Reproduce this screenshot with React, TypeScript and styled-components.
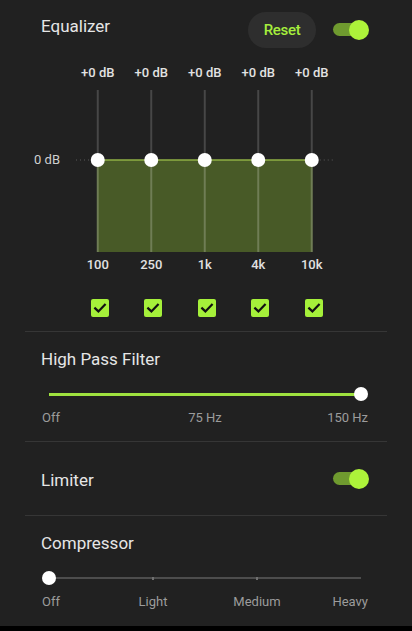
import React from 'react';
import styled, { createGlobalStyle } from 'styled-components';

const GlobalStyle = createGlobalStyle`
  html, body {
    margin: 0;
    padding: 0;
    background: #000;
  }
  body {
    font-family: Roboto, 'Noto Sans', sans-serif;
  }
`;

const accent = '#a6ee3d';

const Panel = styled.main`
  width: 412px;
  height: 626px;
  background: #212121;
  padding: 0 25px;
  box-sizing: border-box;
  display: flex;
  flex-direction: column;
`;

const Section = styled.section<{ divided?: boolean }>`
  padding: 0 18px 0 16px;
  border-top: ${p => (p.divided ? '1px solid #363636' : '0')};
  display: flex;
  flex-direction: column;
`;

const Header = styled.div`
  margin-top: 12px;
  height: 36px;
  display: flex;
  align-items: flex-start;
`;

const Title = styled.h2<{ top?: number }>`
  margin: 0;
  padding-top: ${p => p.top ?? 0}px;
  font-size: 17px;
  line-height: 20px;
  font-weight: 400;
  color: #e6e6e6;
  flex: 1;
`;

const ResetButton = styled.button`
  width: 68px;
  height: 36px;
  border: 0;
  border-radius: 18px;
  background: #2e2e2e;
  color: ${accent};
  font-family: Roboto, sans-serif;
  font-size: 15px;
  font-weight: 500;
  letter-spacing: -0.3px;
  padding: 0;
  margin-right: 17px;
`;

const ToggleTrack = styled.div<{ mt?: number }>`
  width: 33px;
  height: 13px;
  margin-top: ${p => p.mt ?? 0}px;
  border-radius: 7px;
  background: #6f9a2f;
  display: flex;
  align-items: center;
  justify-content: flex-end;
  margin-right: 3px;
`;

const ToggleThumb = styled.div`
  width: 20px;
  height: 20px;
  border-radius: 50%;
  background: #adf33a;
  flex-shrink: 0;
  margin-right: -3px;
`;

const Columns = styled.div<{ mt: number; shift?: number; mb?: number }>`
  display: grid;
  grid-template-columns: repeat(5, 53.5px);
  margin-top: ${p => p.mt}px;
  margin-bottom: ${p => p.mb ?? 0}px;
  margin-left: ${p => 30 + (p.shift ?? 0)}px;
`;

const ColLabel = styled.span`
  text-align: center;
  font-size: 13px;
  line-height: 15px;
  font-weight: 500;
  color: #e2e2e2;
  white-space: nowrap;
`;

const GraphRow = styled.div`
  display: flex;
  margin-top: 10px;
  height: 162px;
`;

const ZeroLabel = styled.span`
  width: 30px;
  box-sizing: border-box;
  padding-right: 11px;
  display: flex;
  justify-content: flex-end;
  align-self: flex-start;
  white-space: nowrap;
  font-size: 13px;
  line-height: 15px;
  color: #d0d0d0;
  margin-top: 62px;
`;

const Graph = styled.svg`
  overflow: visible;
  display: block;
`;

const CheckCell = styled.div`
  display: flex;
  justify-content: center;
`;

const CheckBox = styled.div`
  width: 18px;
  height: 18px;
  border-radius: 2px;
  background: #a5f03a;
  display: flex;
  align-items: center;
  justify-content: center;
`;

const SliderRow = styled.div<{ mt: number }>`
  margin: ${p => p.mt}px 8px 0;
  height: 14px;
  display: flex;
  align-items: center;
`;

const Segment = styled.div<{ active?: boolean }>`
  flex: 1;
  height: ${p => (p.active ? 3 : 2)}px;
  background: ${p => (p.active ? '#9fe23f' : '#4d4d4d')};
`;

const Tick = styled.div`
  width: 2px;
  height: 3px;
  background: #707070;
`;

const Knob = styled.div`
  position: relative;
  z-index: 1;
  width: 14px;
  height: 14px;
  border-radius: 50%;
  background: #fff;
  flex-shrink: 0;
  margin: 0 -7px;
`;

const ScaleLabels = styled.div<{ cols: number; mb?: number }>`
  margin: 9px 8px ${p => p.mb ?? 0}px;
  display: grid;
  grid-template-columns: repeat(${p => p.cols}, 1fr);
  font-size: 13px;
  line-height: 15px;
  color: #9c9c9c;
`;

const ScaleLabel = styled.span<{ align: 'start' | 'center' | 'end'; span?: number }>`
  grid-column: span ${p => p.span ?? 1};
  text-align: ${p => (p.align === 'start' ? 'left' : p.align === 'end' ? 'right' : 'center')};
  margin-left: ${p => (p.align === 'start' ? -7 : 0)}px;
  margin-right: ${p => (p.align === 'end' ? -7 : 0)}px;
  white-space: nowrap;
`;

const LimiterRow = styled.div`
  height: 73px;
  display: flex;
  align-items: center;
`;

const bands = ['100', '250', '1k', '4k', '10k'];

const Check = () => (
  <svg width="14" height="14" viewBox="0 0 14 14">
    <path d="M2.2 7.4 L5.4 10.4 L11.8 3.8" fill="none" stroke="#111" strokeWidth="2.2" strokeLinecap="square" />
  </svg>
);

const EqGraph = () => {
  const xs = bands.map((_, i) => 26.75 + i * 53.5);
  const zero = 70;
  const h = 162;
  return (
    <Graph width="268" height={h}>
      <rect x={xs[0]} y={zero} width={xs[4] - xs[0]} height={h - zero} fill="#485a27" />
      {xs.map(x => (
        <g key={x}>
          <line x1={x} y1={0} x2={x} y2={zero} stroke="#474747" strokeWidth="2" />
          <line x1={x} y1={zero} x2={x} y2={h} stroke="#6f7d55" strokeWidth="2" />
        </g>
      ))}
      <line x1={xs[0]} y1={zero} x2={xs[4]} y2={zero} stroke="#8fb044" strokeWidth="1.5" />
      <line x1={5} y1={zero} x2={xs[0]} y2={zero} stroke="#5a5a5a" strokeWidth="1" strokeDasharray="1 3" />
      <line x1={xs[4]} y1={zero} x2={264} y2={zero} stroke="#5a5a5a" strokeWidth="1" strokeDasharray="1 3" />
      {xs.map(x => (
        <circle key={x} cx={x} cy={zero} r="7" fill="#fff" />
      ))}
    </Graph>
  );
};

const Toggle = ({ mt }: { mt?: number }) => (
  <ToggleTrack mt={mt}>
    <ToggleThumb />
  </ToggleTrack>
);

export default function App() {
  return (
    <Panel>
      <GlobalStyle />
      <Section>
        <Header>
          <Title top={4}>Equalizer</Title>
          <ResetButton>Reset</ResetButton>
          <Toggle mt={11} />
        </Header>
        <Columns mt={17}>
          {bands.map(b => (
            <ColLabel key={b}>+0 dB</ColLabel>
          ))}
        </Columns>
        <GraphRow>
          <ZeroLabel>0 dB</ZeroLabel>
          <EqGraph />
        </GraphRow>
        <Columns mt={5}>
          {bands.map(b => (
            <ColLabel key={b}>{b}</ColLabel>
          ))}
        </Columns>
        <Columns mt={27} shift={2} mb={14}>
          {bands.map(b => (
            <CheckCell key={b}>
              <CheckBox>
                <Check />
              </CheckBox>
            </CheckCell>
          ))}
        </Columns>
      </Section>

      <Section divided>
        <Title top={17}>High Pass Filter</Title>
        <SliderRow mt={18}>
          <Segment active />
          <Knob />
        </SliderRow>
        <ScaleLabels cols={4} mb={16}>
          <ScaleLabel align="start">Off</ScaleLabel>
          <ScaleLabel align="center" span={2}>75 Hz</ScaleLabel>
          <ScaleLabel align="end">150 Hz</ScaleLabel>
        </ScaleLabels>
      </Section>

      <Section divided>
        <LimiterRow>
          <Title top={2}>Limiter</Title>
          <Toggle />
        </LimiterRow>
      </Section>

      <Section divided>
        <Title top={17}>Compressor</Title>
        <SliderRow mt={18}>
          <Knob />
          <Segment />
          <Tick />
          <Segment />
          <Tick />
          <Segment />
        </SliderRow>
        <ScaleLabels cols={6}>
          <ScaleLabel align="start">Off</ScaleLabel>
          <ScaleLabel align="center" span={2}>Light</ScaleLabel>
          <ScaleLabel align="center" span={2}>Medium</ScaleLabel>
          <ScaleLabel align="end">Heavy</ScaleLabel>
        </ScaleLabels>
      </Section>
    </Panel>
  );
}
